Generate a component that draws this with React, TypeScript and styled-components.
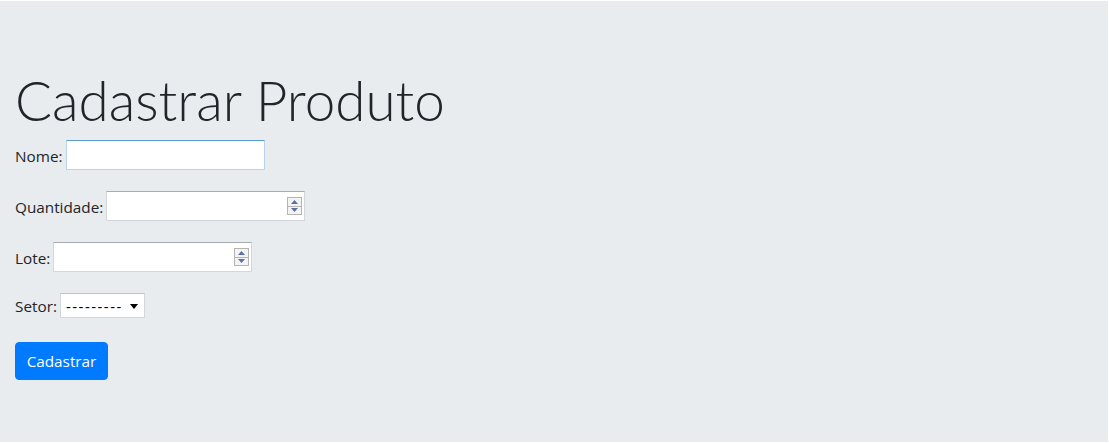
import React from "react";
import styled, { createGlobalStyle } from "styled-components";

const Global = createGlobalStyle`
  html, body { margin: 0; padding: 0; background: #ffffff; }
  body {
    font-family: "Open Sans", "Noto Sans", sans-serif;
    font-size: 15px;
    color: #212529;
  }
  * { box-sizing: border-box; }
`;

const Jumbotron = styled.main`
  margin: 1px 1px 1px 0;
  height: 441px;
  background: #e9ecef;
  padding: 64px 15px 0 15px;
`;

const Title = styled.h1`
  margin: 2px 0 6px 0;
  font-family: "Lato", "Open Sans", sans-serif;
  font-weight: 300;
  font-size: 54.8px;
  line-height: 67px;
  color: #212529;
`;

const Form = styled.form`
  display: flex;
  flex-direction: column;
  align-items: flex-start;
`;

const Row = styled.p<{ $h: number }>`
  margin: 0 0 16px 0;
  height: ${(p) => p.$h}px;
  display: flex;
  align-items: flex-start;
`;

const Label = styled.label<{ $top: number }>`
  margin-top: ${(p) => p.$top}px;
  margin-right: 3px;
  line-height: 20px;
  font-size: 15.3px;
`;

const TextInput = styled.input<{ $w: number; $focus?: boolean }>`
  width: ${(p) => p.$w}px;
  height: 30px;
  background: #fff;
  border: 1px solid ${(p) => (p.$focus ? "#b9d3ea" : "#d3d6da")};
  border-top-color: ${(p) => (p.$focus ? "#5a9bd3" : "#a8abb0")};
  border-radius: 1px;
  outline: none;
  padding: 0 4px;
  font: inherit;
`;

const NumberWrap = styled.span`
  position: relative;
  display: inline-block;
`;

const Spinner = styled.span`
  position: absolute;
  right: 3px;
  top: 6px;
  width: 15px;
  height: 18px;
  display: flex;
  flex-direction: column;
  border: 1px solid #b4b4b4;
  background: #e6e6e6;
`;

const SpinHalf = styled.span<{ $up?: boolean }>`
  flex: 1;
  display: flex;
  align-items: center;
  justify-content: center;
  background: #f3f3f3;
  border-bottom: ${(p) => (p.$up ? "1px solid #b4b4b4" : "none")};
`;

const SelectBox = styled.span`
  position: relative;
  display: inline-flex;
  align-items: center;
  width: 85px;
  height: 25px;
  background: #fff;
  border: 1px solid #d3d6da;
  border-top-color: #c0c3c7;
  padding-left: 5px;
  font-family: "Open Sans", "Noto Sans", sans-serif;
  font-size: 15px;
  color: #000;
  letter-spacing: 1.5px;
`;

const Caret = styled.svg`
  position: absolute;
  right: 6px;
  top: 10px;
`;

const Button = styled.button`
  width: 93px;
  height: 38px;
  background: #007bff;
  color: #fff;
  border: 1px solid #007bff;
  border-radius: 4px;
  font: inherit;
  font-size: 15.3px;
  padding: 0;
`;

const Arrow = ({ up }: { up?: boolean }) => (
  <svg width="7" height="4" viewBox="0 0 7 4">
    {up ? (
      <path d="M3.5 0 L7 4 L0 4 Z" fill="#5b6fa8" />
    ) : (
      <path d="M0 0 L7 0 L3.5 4 Z" fill="#5b6fa8" />
    )}
  </svg>
);

const NumberField = ({ w }: { w: number }) => (
  <NumberWrap>
    <TextInput $w={w} type="text" />
    <Spinner>
      <SpinHalf $up>
        <Arrow up />
      </SpinHalf>
      <SpinHalf>
        <Arrow />
      </SpinHalf>
    </Spinner>
  </NumberWrap>
);

export default function App() {
  return (
    <>
      <Global />
      <Jumbotron>
        <Title>Cadastrar Produto</Title>
        <Form onSubmit={(e) => e.preventDefault()}>
          <Row $h={35}>
            <Label $top={6}>Nome:</Label>
            <TextInput $w={199} $focus type="text" />
          </Row>
          <Row $h={35}>
            <Label $top={6}>Quantidade:</Label>
            <NumberField w={199} />
          </Row>
          <Row $h={35}>
            <Label $top={6}>Lote:</Label>
            <NumberField w={199} />
          </Row>
          <Row $h={33}>
            <Label $top={3}>Setor:</Label>
            <SelectBox>
              ---------
              <Caret width="8" height="5" viewBox="0 0 8 5">
                <path d="M0 0 L8 0 L4 5 Z" fill="#000" />
              </Caret>
            </SelectBox>
          </Row>
          <Button type="submit">Cadastrar</Button>
        </Form>
      </Jumbotron>
    </>
  );
}
